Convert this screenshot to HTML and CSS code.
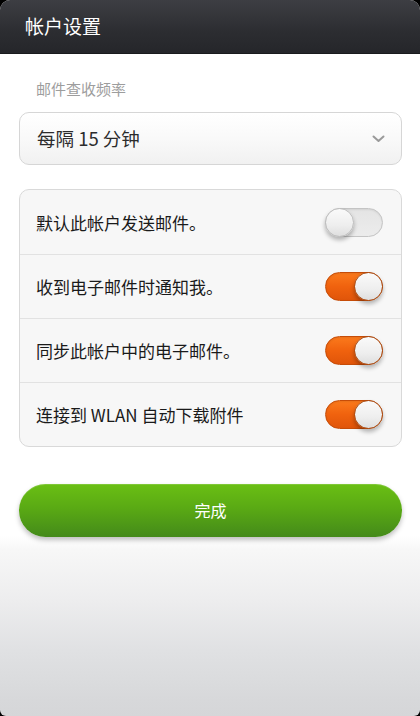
FILE: index.html
```html
<!DOCTYPE html>
<html lang="zh-CN">
<head>
<meta charset="utf-8">
<title>帐户设置</title>
<link rel="stylesheet" href="styles.css">
</head>
<body>
<div class="screen">
  <header class="topbar">
    <h1 class="title">帐户设置</h1>
  </header>
  <main class="content">
    <div class="field-label">邮件查收频率</div>
    <div class="select">
      <span class="select-text">每隔 15 分钟</span>
      <svg class="chevron" width="13" height="8" viewBox="0 0 13 8"><path d="M1.5 1.5 L6.5 6 L11.5 1.5" fill="none" stroke="#9a9a9a" stroke-width="2" stroke-linecap="round" stroke-linejoin="round"/></svg>
    </div>
    <div class="card">
      <div class="row">
        <span class="row-text">默认此帐户发送邮件。</span>
        <span class="toggle"><span class="knob"></span></span>
      </div>
      <div class="row">
        <span class="row-text">收到电子邮件时通知我。</span>
        <span class="toggle on"><span class="knob"></span></span>
      </div>
      <div class="row">
        <span class="row-text">同步此帐户中的电子邮件。</span>
        <span class="toggle on"><span class="knob"></span></span>
      </div>
      <div class="row">
        <span class="row-text">连接到 WLAN 自动下载附件</span>
        <span class="toggle on"><span class="knob"></span></span>
      </div>
    </div>
    <button class="done">完成</button>
  </main>
</div>
</body>
</html>
```
FILE: styles.css
```css
html, body {
  margin: 0;
  padding: 0;
  background: #000;
}
body {
  font-family: "Noto Sans CJK SC", "Noto Sans", "Liberation Sans", sans-serif;
}
.screen {
  width: 420px;
  height: 716px;
  display: flex;
  flex-direction: column;
  border-radius: 10px 10px 6px 6px;
  overflow: hidden;
  background: linear-gradient(to bottom, #ffffff 0, #ffffff 536px, #f7f7f7 550px, #ededee 600px, #e0e1e3 650px, #d7d8da 700px, #d5d6d8 716px);
}
.topbar {
  height: 53px;
  flex: none;
  display: flex;
  align-items: center;
  padding-left: 25px;
  background: linear-gradient(to bottom, #3d3e43 0, #2c2d31 60%, #25262a 100%);
  border-bottom: 1px solid #1a1b1d;
}
.title {
  margin: 0;
  font-size: 19px;
  font-weight: 400;
  color: #ffffff;
  line-height: 1;
  padding-bottom: 2px;
}
.content {
  flex: 1;
  padding: 0 18px 0 19px;
  display: flex;
  flex-direction: column;
}
.field-label {
  margin-top: 24px;
  padding-left: 17px;
  font-size: 15px;
  line-height: 22px;
  color: #9d9d9d;
}
.select {
  margin-top: 12px;
  height: 51px;
  border: 1px solid #d6d6d6;
  border-radius: 10px;
  background: linear-gradient(to bottom, #ffffff 0, #f9f9f9 50%, #f1f1f1 100%);
  display: flex;
  align-items: center;
  justify-content: space-between;
  padding: 0 16px 0 17px;
}
.select-text {
  font-size: 18.5px;
  color: #2c2c2c;
  padding-bottom: 2px;
}
.chevron {
  display: block;
}
.card {
  margin-top: 24px;
  border: 1px solid #d9d9d9;
  border-radius: 10px;
  background: #f7f7f7;
}
.row {
  height: 64px;
  display: flex;
  align-items: center;
  justify-content: space-between;
  padding: 0 18px 0 16px;
}
.row + .row {
  height: 63px;
  border-top: 1px solid #e2e2e2;
}
.row-text {
  font-size: 17px;
  color: #1a1a1a;
}
.toggle {
  position: relative;
  width: 58px;
  height: 29px;
  border-radius: 15px;
  box-sizing: border-box;
  border: 1px solid #c4c4c4;
  background: linear-gradient(to bottom, #e4e4e4, #ececec);
  box-shadow: inset 0 1px 2px rgba(0,0,0,0.08);
}
.toggle.on {
  border: 1px solid #c64c08;
  background: linear-gradient(to bottom, #fb7a1c 0, #f0620e 50%, #e0550a 100%);
}
.knob {
  position: absolute;
  top: -1px;
  left: -1px;
  width: 29px;
  height: 29px;
  border-radius: 50%;
  box-sizing: border-box;
  border: 1px solid #bdbdbd;
  background: linear-gradient(to bottom, #fafafa 0, #eeeeee 60%, #dedede 100%);
  box-shadow: 0 3px 4px rgba(0,0,0,0.28);
}
.toggle.on .knob {
  left: auto;
  right: -1px;
  border-color: #a84a12;
}
.done {
  margin-top: 37px;
  height: 53px;
  border: none;
  border-radius: 27px;
  background: linear-gradient(to bottom, #6abf14 0, #5aaa14 45%, #448a1a 100%);
  box-shadow: 0 3px 5px rgba(0,0,0,0.25), inset 0 1px 0 rgba(255,255,255,0.15);
  color: #ffffff;
  font-family: "Noto Sans CJK SC", "Noto Sans", sans-serif;
  font-size: 16px;
  padding: 0 0 2px 0;
}
```
